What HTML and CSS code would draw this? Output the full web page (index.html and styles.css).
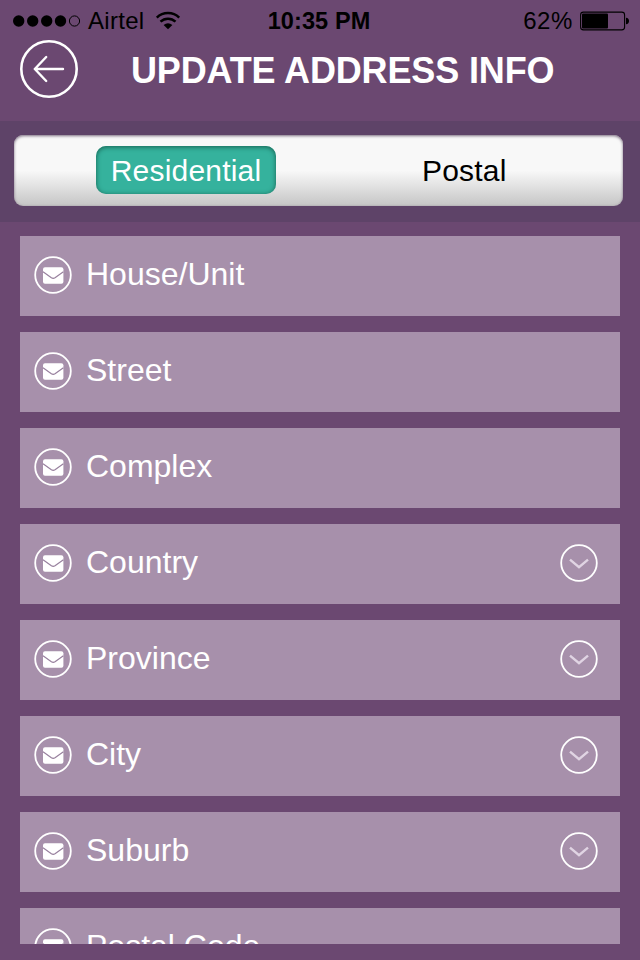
FILE: index.html
```html
<!DOCTYPE html>
<html lang="en">
<head>
<meta charset="utf-8">
<title>Update Address Info</title>
<link rel="stylesheet" href="styles.css">
</head>
<body>
<svg class="defs" width="0" height="0" aria-hidden="true">
  <symbol id="mail" viewBox="0 0 38 38">
    <circle cx="19" cy="19" r="17.8" fill="none" stroke="#fff" stroke-width="1.8"/>
    <rect x="9" y="11.2" width="20.4" height="16.6" rx="2" fill="#fff"/>
    <path d="M9 15.8L17.4 21.8Q19.2 23 21 21.8L29.4 15.8" fill="none" stroke="#98809e" stroke-width="1.2"/>
  </symbol>
  <symbol id="down" viewBox="0 0 38 38">
    <circle cx="19" cy="19" r="17.8" fill="none" stroke="#fff" stroke-width="1.8"/>
    <path d="M10 15.6L19 23.2L28 15.6" fill="none" stroke="#e0d4e3" stroke-width="2.4"/>
  </symbol>
</svg>
<div class="screen">
  <div class="status">
    <div class="carrier">
      <svg width="68" height="12" viewBox="0 0 68 12"><circle cx="5.7" cy="6" r="5.7"/><circle cx="19.7" cy="6" r="5.7"/><circle cx="33.7" cy="6" r="5.7"/><circle cx="47.5" cy="6" r="5.7"/><circle cx="61.5" cy="6" r="5.1" fill="none" stroke="#000"/></svg>
      <span class="network">Airtel</span>
      <svg class="wifi" width="26" height="19" viewBox="0 0 26 19"><path d="M1.8 6.6A16.2 16.2 0 0 1 24.2 6.6M5.5 10.7A10.8 10.8 0 0 1 20.5 10.7" fill="none" stroke="#000" stroke-width="2.5"/><path d="M8.6 13.9Q13 10.4 17.4 13.9L13 18.2Z"/></svg>
    </div>
    <span class="time">10:35 PM</span>
    <div class="power">
      <span class="percent">62%</span>
      <svg width="50" height="20" viewBox="0 0 50 20"><rect x=".6" y="1.1" width="44" height="17.8" rx="2.8" fill="none" stroke="#000" stroke-width="1.1"/><rect x="2" y="2.6" width="26" height="14.8" rx="1"/><path d="M46 6.8Q49 7 49 10T46 13.2Z"/></svg>
    </div>
  </div>
  <header class="header">
    <svg class="back" width="58" height="58" viewBox="0 0 58 58" fill="none" stroke="#fff"><circle cx="29" cy="29" r="27.7" stroke-width="2.6"/><path d="M43 29H14.8M26.2 17L14.8 29L26.2 41" stroke-width="2.4" stroke-linecap="round" stroke-linejoin="round"/></svg>
    <h1>UPDATE ADDRESS INFO</h1>
  </header>
  <div class="band">
    <div class="tabs">
      <div class="tab selected">Residential</div>
      <div class="tab">Postal</div>
    </div>
  </div>
  <main class="fields">
    <div class="field"><svg class="icon"><use href="#mail"/></svg><span>House/Unit</span></div>
    <div class="field"><svg class="icon"><use href="#mail"/></svg><span>Street</span></div>
    <div class="field"><svg class="icon"><use href="#mail"/></svg><span>Complex</span></div>
    <div class="field"><svg class="icon"><use href="#mail"/></svg><span>Country</span><svg class="icon"><use href="#down"/></svg></div>
    <div class="field"><svg class="icon"><use href="#mail"/></svg><span>Province</span><svg class="icon"><use href="#down"/></svg></div>
    <div class="field"><svg class="icon"><use href="#mail"/></svg><span>City</span><svg class="icon"><use href="#down"/></svg></div>
    <div class="field"><svg class="icon"><use href="#mail"/></svg><span>Suburb</span><svg class="icon"><use href="#down"/></svg></div>
    <div class="field"><svg class="icon"><use href="#mail"/></svg><span>Postal Code</span></div>
  </main>
</div>
</body>
</html>
```
FILE: styles.css
```css
* { box-sizing: border-box; }
body { margin: 0; background: #6b4871; font-family: "Liberation Sans", Arial, sans-serif; }
.defs { display: block; }
.screen { width: 640px; height: 960px; overflow: hidden; background: #6b4871; }
.status { display: grid; grid-template-columns: 1fr auto 1fr; height: 40px; padding: 0 10px 0 13px; font-size: 24px; color: #000; }
.status > * { display: flex; align-items: center; height: 41px; }
.carrier .network { margin-left: 7px; padding-top: 1px; letter-spacing: .3px; }
.carrier .wifi { margin-left: 11px; }
.time { padding: 1px 5px 0 0; font-weight: bold; font-size: 23.5px; letter-spacing: .1px; }
.power { justify-content: flex-end; }
.power .percent { margin-right: 7px; padding-top: 1px; letter-spacing: .6px; }
.header { display: flex; height: 81px; padding-left: 20px; }
.back { flex: none; }
h1 { margin: 0 0 0 53px; font-size: 36px; line-height: 62px; letter-spacing: -.14px; white-space: nowrap; }
.header h1 { color: #fff; }
.band { height: 101px; padding: 14px 17px 0 14px; background: #5e4368; }
.tabs { display: grid; grid-template-columns: 344px 1fr; height: 71px; padding-top: 11px; border-radius: 9px; background: linear-gradient(#f8f8f8 0 50%, #e7e7e7 67%, #c5c5c5 100%); box-shadow: inset 0 1px 3px #77697c; }
.tab { justify-self: center; height: 48px; line-height: 49px; font-size: 30px; letter-spacing: .2px; color: #000; }
.tab:not(.selected) { justify-self: start; padding-left: 64px; }
.tab.selected { width: 180px; text-align: center; color: #fff; border-radius: 10px; background: #35b29d; box-shadow: inset 0 1px 5px #16604f; }
.fields { display: flex; flex-direction: column; gap: 16px; height: 708px; margin-top: 14px; padding: 0 20px; overflow: hidden; }
.field { display: flex; flex: none; align-items: center; height: 80px; padding: 0 22px 2px 14px; color: #fff; background: #a790ab; font-size: 32px; }
.field span { flex: 1; margin-left: 14px; padding-bottom: 2px; line-height: 76px; }
.icon { flex: none; width: 38px; height: 38px; }
```
